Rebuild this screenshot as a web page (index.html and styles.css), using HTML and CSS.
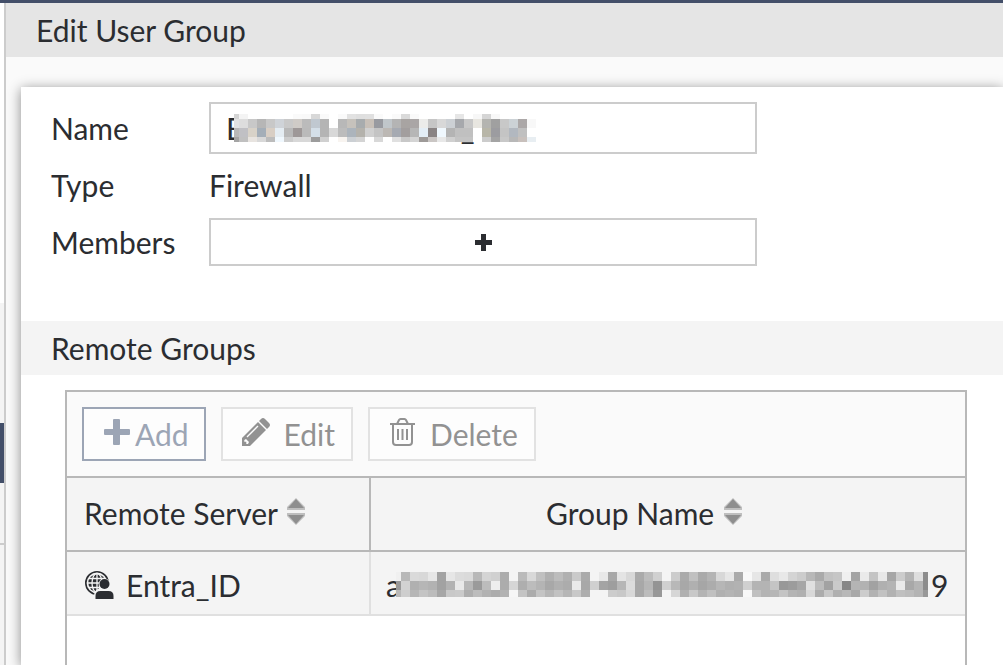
FILE: index.html
```html
<!DOCTYPE html>
<html lang="en">
<head>
    <meta charset="UTF-8">
    <meta name="viewport" content="width=device-width, initial-scale=1.0">
    <title>Edit User Group</title>
    <link rel="stylesheet" href="styles.css">
</head>
<body>
    <div class="topbar"></div>
    <div class="page">
        <div class="side">
            <div class="side-top"></div>
            <div class="side-group"></div>
            <div class="side-active"></div>
            <div class="side-group side-group-last"></div>
            <div class="side-rest"></div>
        </div>
        <main class="main">
            <h1 class="title">Edit User Group</h1>
            <div class="card">
                <div class="form">
                    <label for="name">Name</label>
                    <div class="name-wrap">
                        <input class="field" id="name" type="text" value="E&#8195;&#8195;&#8195;&#8195;&#8195;&#8195;&#8195;&#8195;&#8195;&#8194;_">
                        <svg class="mask mask-name" id="nameMask" width="302" height="28"></svg>
                    </div>
                    <span class="value">Type</span>
                    <span class="value">Firewall</span>
                    <label for="members">Members</label>
                    <button class="field members" id="members" type="button" aria-label="Add member">
                        <svg width="17" height="17" viewBox="0 0 17 17"><path d="M6 0h5v6h6v5h-6v6H6v-6H0V6h6z" fill="#2b2d31"/></svg>
                    </button>
                </div>
                <h2 class="section">Remote Groups</h2>
                <div class="grid-box">
                    <div class="toolbar">
                        <button class="btn btn-add" type="button">
                            <svg width="26" height="26" viewBox="0 0 26 26"><path d="M10 0h5q1 0 1 1v9h9q1 0 1 1v4q0 1-1 1h-9v9q0 1-1 1h-5q-1 0-1-1v-9H1q-1 0-1-1v-4q0-1 1-1h8V1q0-1 1-1z" fill="#9ca5b5"/></svg>
                            Add
                        </button>
                        <button class="btn btn-edit" type="button">
                            <svg width="28" height="28" viewBox="0 0 28 28"><path d="M0 28v-8L16 4l8 8L8 28z" fill="#929292"/><path d="M17 3l2-2q2-2 4 0l4 4q2 2 0 4l-2 2z" fill="#929292"/><path d="M5 19L16 8" stroke="#fdfdfd" stroke-width="1.3"/><path d="M2.300 22v1.700h2V26H6l1-2-3-3z" fill="#fdfdfd"/></svg>
                            Edit
                        </button>
                        <button class="btn btn-delete" type="button">
                            <svg width="26" height="28" viewBox="0 0 26 28" fill="none" stroke="#929292" stroke-width="2"><path d="M0 6h25M7 6l2-4q.5-1 1.500-1h4q1 0 1.500 1l2 4M3 6v18q0 3 3 3h13q3 0 3-3V6M8 11v11M12.500 11v11M17 11v11"/></svg>
                            Delete
                        </button>
                    </div>
                    <table class="grid">
                        <thead>
                            <tr>
                                <th class="col-server">Remote Server <svg class="sort" width="18" height="27" viewBox="0 0 18 27"><path d="M9 0l9 9v3H0V9zM0 15h18v3l-9 9-9-9z" fill="#bebebe"/><path d="M9 1l8 9H1zM1 17h16l-8 9z" fill="#8e8e8e"/></svg></th>
                                <th class="col-group">Group Name <svg class="sort" width="18" height="27" viewBox="0 0 18 27"><path d="M9 0l9 9v3H0V9zM0 15h18v3l-9 9-9-9z" fill="#bebebe"/><path d="M9 1l8 9H1zM1 17h16l-8 9z" fill="#8e8e8e"/></svg></th>
                            </tr>
                        </thead>
                        <tbody>
                            <tr>
                                <td>
                                    <div class="cell">
                                        <svg width="29" height="28" viewBox="0 0 29 28"><circle cx="12" cy="12" r="11.200" fill="none" stroke="#2b2d31" stroke-width="1.600"/><circle cx="12" cy="12" r="8.700" fill="#2b2d31"/><g fill="none" stroke="#f4f4f4" stroke-width="1.300"><ellipse cx="12" cy="12" rx="5" ry="9.500"/><path d="M12 3v18M3 12h18M4 7.500h16M4 16.500h16"/></g><path d="M9 28v-3q0-6 5-7.500Q12 8 19.500 7q8 2 5 10.500 4.500 2 4.500 7V28z" fill="#f4f4f4"/><circle cx="19.500" cy="13" r="5" fill="#2b2d31"/><path d="M10.500 28v-3q0-5 5-5h8q5 0 5 5v3z" fill="#2b2d31"/></svg>
                                        <span>Entra_ID</span>
                                    </div>
                                </td>
                                <td>
                                    <div class="cell cell-group">
                                        <span>a</span>
                                        <svg class="mask" id="groupMask" width="532" height="25"></svg>
                                        <span class="tail">9</span>
                                    </div>
                                </td>
                            </tr>
                        </tbody>
                    </table>
                </div>
            </div>
        </main>
    </div>

    <script>
        // first block is 5px wide, all others 9px
        var nameRows = [
            [5, 'd4 f4 ff ff ff ff ff fa f9 d8 fa ff fa e2 df e0 fa ff fa da fa ff ff ff ff e6 ff f7 d5 f8 ff ff ff ff'],
            [9, 'e2 dd c8 b6 c8 cfd3d8 c9 cfcbc7 bb c0c8d0 b4 ff b8 c6c2bc a8acae c8c0b8 989aa0 c0c6ca b4 a8a4a2 aaa6a6 ececea c6 d8 ccd0d4 a6a8ac c8 e8e6e0 b4b4b0 a0 c8 ccd2d6 aca8a8 f8'],
            [9, 'b8 c0c0c4 d8d2c8 a4aeb8 d8cec4 e4ecf2 b8 9e9898 ba d4dfe8 b4 d8 bc acb4bc b4b2ac d0 c4 bcb8b4 a6aab2 a29e9e b6 e4eef6 8a8484 f0f8fe b4 c0 c0 ff b8b6a8 9c9ca0 c4 b2b8c0 c0 ff'],
            [5, 'a4 c0 e8e4e0 d8 bc f0f8fe cc d8 d8 9c d0 ff f8f4f0 ccd0d4 d4 ff d8 ff e0 c8 d4 9e9a98 cac6c4 e8 d0 c4 c4 ff cc a4 c8 b8 c8c0bc e8eef2']
        ];
        var groupRows = [
            [9, 'f0 b8 da d8 e6 a2 e6 dc da b8 d4 d0 ac f4 ba d8 c0 b0 bc b0 ca aa f4 e8 a8 e4 d8 aa bc d0 f4 cc aa c0 aa b4 d8 e6 aa f8 e6 aa de e8 d4 cc b8 aa c2 c6 f0 a4 ea c4 e8 a6 cc b4 de 8c'],
            [9, '98 d2 b0 b6 b2 a2 b2 e8 b6 9a bc ee ac d6 ae bc b4 a8 b0 ac ea a8 d0 a4 9e b6 dc a8 b6 94 d0 b8 a8 b0 a6 ac b6 b0 b2 d0 b4 b4 c4 98 9c a6 e0 bc a2 ca 86 b4 b2 a2 b0 b4 ea a8 b4 8c'],
            [7, 'b8 ce b6 c4 bc a6 c8 ca ae bc b2 ac b2 f6 c4 ac c4 b6 c2 b6 c8 ae f4 f4 cc c8 d8 a8 bc 98 f4 d6 b0 c8 b4 c0 b0 b4 b0 f8 c0 b4 b6 c4 b4 b0 d8 ac c8 b0 b8 a8 cc b2 c2 b2 c0 bc b4 98']
        ];

        function drawMask(id, rows) {
            var svg = document.getElementById(id);
            var y = 0;
            rows.forEach(function(row) {
                row[1].split(' ').forEach(function(c, i) {
                    var rect = document.createElementNS('http://www.w3.org/2000/svg', 'rect');
                    rect.setAttribute('x', i ? 5 + (i - 1) * 9 : 0);
                    rect.setAttribute('y', y);
                    rect.setAttribute('width', i ? 9 : 5);
                    rect.setAttribute('height', row[0]);
                    rect.setAttribute('fill', '#' + (c.length == 2 ? c + c + c : c));
                    svg.appendChild(rect);
                });
                y += row[0];
            });
        }

        drawMask('nameMask', nameRows);
        drawMask('groupMask', groupRows);
    </script>
</body>
</html>
```

FILE: styles.css
```css
* {
    box-sizing: border-box;
    margin: 0;
    padding: 0;
}
body {
    display: flex;
    flex-direction: column;
    height: 100vh;
    overflow: hidden;
    background: #fff;
    color: #2b2d31;
    font: 30px/36px Lato, "Liberation Sans", sans-serif;
}
svg {
    display: block;
    flex: none;
}
.topbar {
    flex: none;
    height: 3px;
    background: #434f69;
}
.page {
    display: flex;
    flex: 1;
    min-height: 0;
}

/* edge of the navigation menu */
.side {
    display: flex;
    flex-direction: column;
    flex: none;
    width: 6px;
    border-right: 2px solid #ccc;
}
.side-top {
    height: 300px;
}
.side-group {
    height: 120px;
    background: #f4f4f4;
}
.side-active {
    height: 60px;
    background: #434f69;
}
.side-group-last {
    height: 62px;
    border-bottom: 2px solid #ccc;
}
.side-rest {
    flex: 1;
    background: #f4f4f4;
}

.main {
    display: flex;
    flex-direction: column;
    flex: 1;
    min-width: 0;
    background: #fafafa;
}
.title {
    padding: 9px 30px;
    background: #e5e5e5;
    font-size: 30px;
    font-weight: 400;
}
.card {
    display: flex;
    flex-direction: column;
    flex: 1;
    margin: 30px 0 0 15px;
    background: #fff;
    box-shadow: 0 2px 12px rgba(0, 0, 0, .45);
}
.form {
    display: grid;
    grid-template-columns: 158px minmax(0, 548px);
    grid-template-rows: 52px 64px 48px;
    align-items: center;
    padding: 15px 30px 55px;
}
.name-wrap {
    position: relative;
}
.value {
    padding-bottom: 3px;
}
.field {
    display: block;
    width: 100%;
    height: 52px;
    padding: 0 15px;
    border: 2px solid #ccc;
    background: #fff;
    color: inherit;
    font: inherit;
}
.members {
    display: flex;
    align-items: center;
    justify-content: center;
    height: 48px;
}
.mask-name {
    position: absolute;
    left: 25px;
    top: 12px;
}
.section {
    padding: 9px 30px;
    background: #f4f4f4;
    font-size: 30px;
    font-weight: 400;
}
.grid-box {
    flex: 1;
    margin: 15px 36px 0 44px;
    border: 2px solid #b8b8b8;
    border-bottom: 0;
}
.toolbar {
    display: flex;
    gap: 15px;
    padding: 15px;
    background: #fafafa;
    border-bottom: 2px solid #b8b8b8;
}
.btn {
    display: flex;
    align-items: center;
    gap: 14px;
    height: 54px;
    padding: 0 16px 0 19px;
    border: 2px solid #e2e2e2;
    background: #fdfdfd;
    color: #929292;
    font: inherit;
}
.btn svg {
    margin-bottom: 4px;
}
.btn-add {
    gap: 5px;
    padding: 0 15px 0 20px;
    border-color: #9ca5b5;
    color: #9ca5b5;
}
.btn-delete {
    padding-left: 20px;
}
.grid {
    width: 100%;
    border-collapse: separate;
    border-spacing: 0;
    table-layout: fixed;
    background: #f4f4f4;
}
th {
    height: 74px;
    padding: 0 17px 2px;
    border-bottom: 2px solid #b8b8b8;
    font-weight: 400;
    text-align: left;
}
.col-server {
    width: 304px;
    border-right: 2px solid #b8b8b8;
}
.col-group {
    padding-right: 65px;
    text-align: center;
}
.sort {
    display: inline-block;
    margin-left: 2px;
}
td {
    height: 64px;
    padding: 3px 15px 0;
    border-bottom: 2px solid #e0e0e0;
}
td:first-child {
    padding-left: 18px;
    border-right: 2px solid #e0e0e0;
}
.cell {
    display: flex;
    align-items: center;
    gap: 12px;
}
.cell-group {
    gap: 0;
}
.cell-group .mask {
    margin-left: -5px;
}
.tail {
    margin-left: 3px;
}
```
